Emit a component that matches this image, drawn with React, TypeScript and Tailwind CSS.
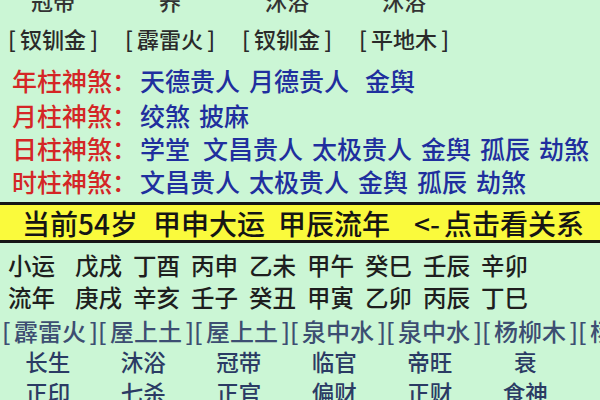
const topNayin = ["钗钏金", "霹雷火", "钗钏金", "平地木"];
const topStages = ["冠带", "养", "沐浴", "沐浴"];

const shensha = [
  { label: "年柱神煞：", items: ["天德贵人", "月德贵人", "金舆"], wide: 2 },
  { label: "月柱神煞：", items: ["绞煞", "披麻"], wide: -1 },
  { label: "日柱神煞：", items: ["学堂", "文昌贵人", "太极贵人", "金舆", "孤辰", "劫煞"], wide: 0 },
  { label: "时柱神煞：", items: ["文昌贵人", "太极贵人", "金舆", "孤辰", "劫煞"], wide: -1 },
];

const xiaoyun = ["戊戌", "丁酉", "丙申", "乙未", "甲午", "癸巳", "壬辰", "辛卯"];
const liunian = ["庚戌", "辛亥", "壬子", "癸丑", "甲寅", "乙卯", "丙辰", "丁巳"];
const bottomNayin = ["霹雷火", "屋上土", "屋上土", "泉中水", "泉中水", "杨柳木", "杨柳木"];
const stages = ["长生", "沐浴", "冠带", "临官", "帝旺", "衰"];
const gods = ["正印", "七杀", "正官", "偏财", "正财", "食神"];

function YearRow({ label, items }: { label: string; items: string[] }) {
  return (
    <div className="flex h-[32px] items-center pl-[8px] text-[23.5px] leading-[32px] text-[#1e1e1e]">
      <span className="mr-[20px]">{label}</span>
      <div className="flex gap-[11px]">
        {items.map((it, i) => (
          <span key={i}>{it}</span>
        ))}
      </div>
    </div>
  );
}

export default function App() {
  return (
    <div className="h-[400px] w-[600px] overflow-hidden bg-[#cbf6d5] font-medium [font-family:'Noto_Sans_CJK_SC','Noto_Sans',sans-serif]">
      {/* 大运 column header (cut off at top) */}
      <div className="-mt-[15px] flex h-[30px] gap-[27px] pl-[8px] text-[22px] leading-[30px] text-[#333]">
        {topStages.map((s, i) => (
          <span key={i} className="w-[90px] text-center">
            {s}
          </span>
        ))}
      </div>
      <div className="flex h-[46px] items-center gap-[27px] pl-[8px] text-[22px] text-[#2a2a2a]">
        {topNayin.map((s, i) => (
          <span key={i} className="flex w-[90px] justify-between">
            <span>[</span>
            <span>{s}</span>
            <span>]</span>
          </span>
        ))}
      </div>

      {/* 神煞 */}
      <div className="pt-[2px]">
        {shensha.map((row, r) => (
          <div
            key={r}
            className={`flex items-center pl-[12px] text-[25px] ${r === 0 ? "h-[36px]" : "h-[33px]"}`}
          >
            <span className="w-[128px] text-[#d42626]">{row.label}</span>
            <div className="flex gap-[9px] text-[#1f2f9e]">
              {row.items.map((it, i) => (
                <span
                  key={i}
                  className={
                    row.wide === 2 && i === 2 ? "ml-[7px]" : row.wide === 0 && i === 1 ? "ml-[4px]" : ""
                  }
                >
                  {it}
                </span>
              ))}
            </div>
          </div>
        ))}
      </div>

      {/* banner */}
      <div className="mt-[4px] flex h-[41px] items-center border-y-[3px] border-[#161616] bg-[#fafa3c] text-[28px] text-[#151515]">
        <span className="ml-[22px]">当前54岁</span>
        <span className="ml-[15px]">甲申大运</span>
        <span className="ml-[13px]">甲辰流年</span>
        <span className="ml-[24px]">&lt;-</span>
        <span className="ml-[4px]">点击看关系</span>
      </div>

      <div className="mt-[6px]">
        <YearRow label="小运" items={xiaoyun} />
        <YearRow label="流年" items={liunian} />
      </div>

      <div className="mt-[2px] flex h-[31px] items-center whitespace-nowrap pl-[2px] text-[24px] text-[#3d4e72]">
        {bottomNayin.map((s, i) => (
          <span key={i} className="flex w-[96px] shrink-0 justify-between">
            <span>[</span>
            <span>{s}</span>
            <span>]</span>
          </span>
        ))}
      </div>
      <div className="flex h-[31px] items-center text-[22.5px] text-[#2b3b64]">
        {stages.map((s, i) => (
          <span key={i} className="w-[95.5px] shrink-0 text-center">
            {s}
          </span>
        ))}
      </div>
      <div className="flex h-[31px] items-center text-[22.5px] text-[#2b3b64]">
        {gods.map((s, i) => (
          <span key={i} className="w-[95.5px] shrink-0 text-center">
            {s}
          </span>
        ))}
      </div>
    </div>
  );
}
